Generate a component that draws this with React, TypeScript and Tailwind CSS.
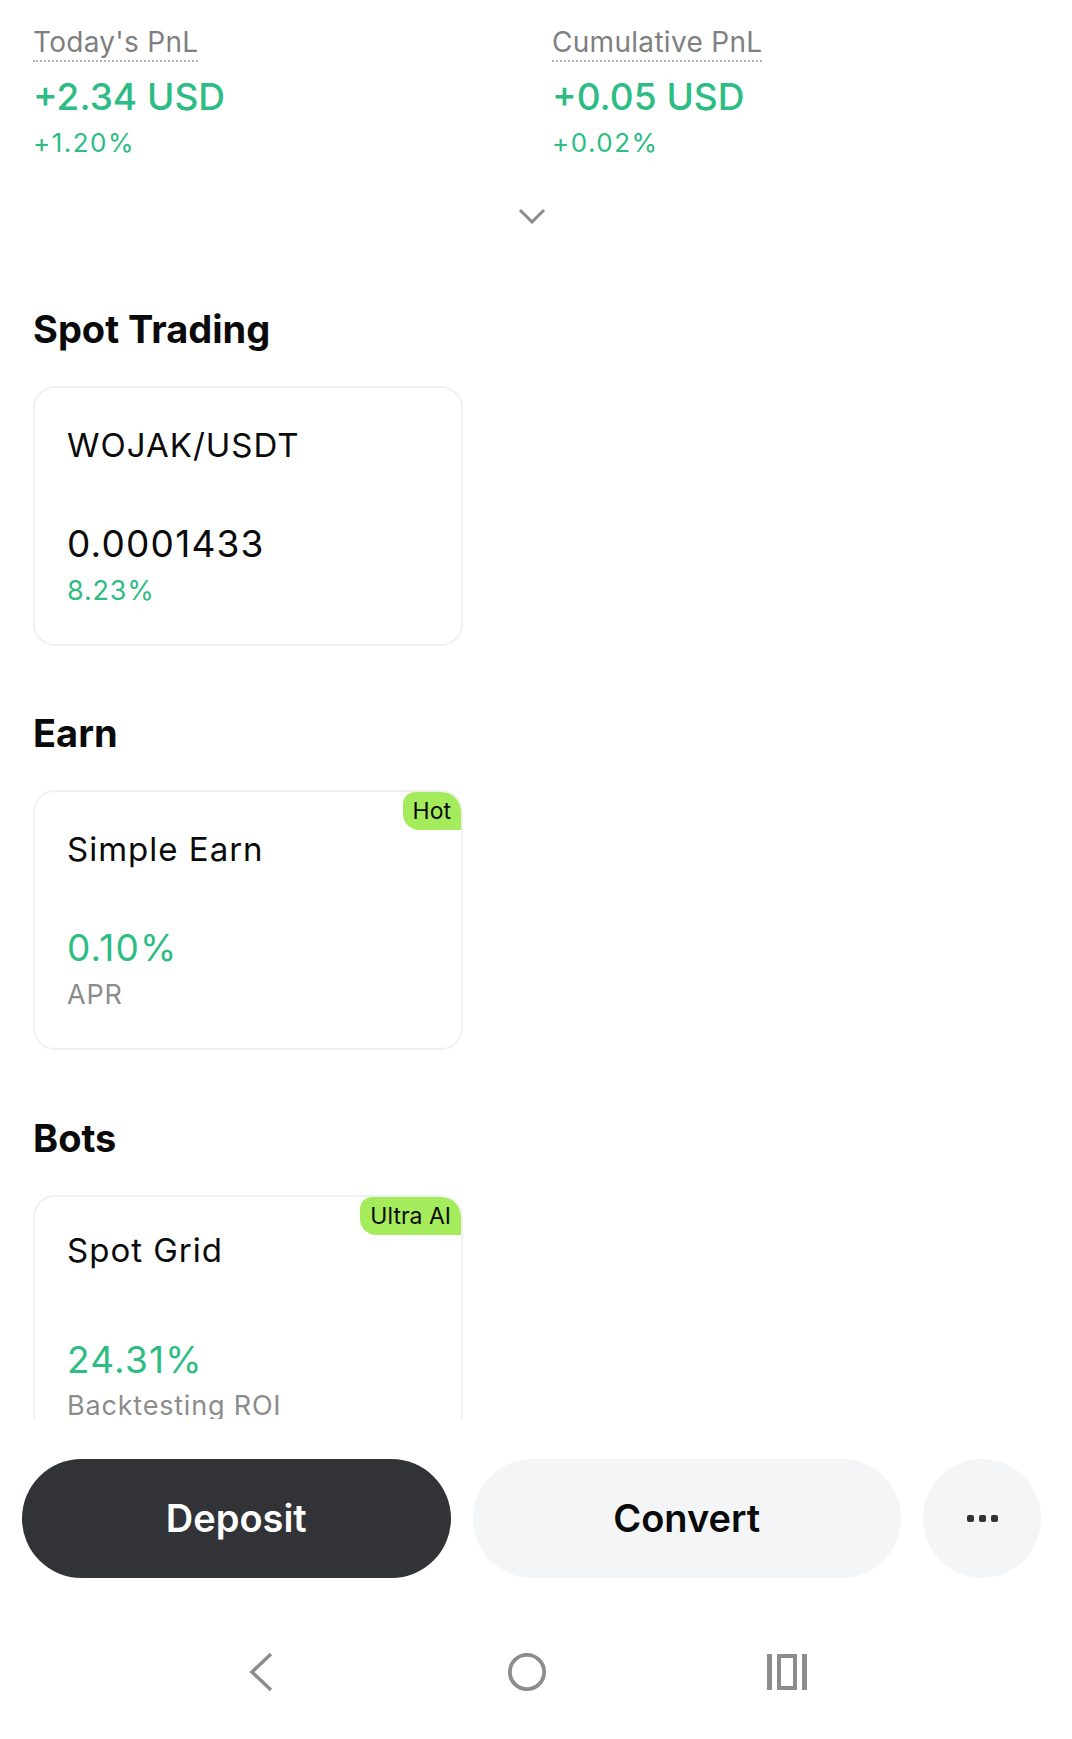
import type { ReactNode } from 'react';

const GREEN = 'text-[#2dbc84]';

type CardProps = {
  title: string;
  value: string;
  sub: string;
  valueClass: string;
  subClass: string;
  badge?: string;
  tight?: boolean;
};

const Stat = ({ label, value, change }: { label: string; value: string; change: string }) => (
  <div>
    <div className="flex">
      <span className="border-b-2 border-dotted border-[#b5b5b5] text-[28px] leading-[36px] tracking-[0.3px] text-[#7f7f7f]">
        {label}
      </span>
    </div>
    <div className={`mt-[13px] text-[37px] font-medium leading-[44px] ${GREEN}`}>{value}</div>
    <div className={`mt-[8px] text-[26px] leading-[32px] tracking-[1.5px] ${GREEN}`}>{change}</div>
  </div>
);

const SectionTitle = ({ children, className }: { children: ReactNode; className: string }) => (
  <h2 className={`text-[38px] font-bold leading-[46px] text-[#0a0a0a] ${className}`}>{children}</h2>
);

const Card = ({ title, value, sub, valueClass, subClass, badge, tight }: CardProps) => (
  <div
    className={`relative mt-[34px] w-[430px] overflow-hidden rounded-[22px] border-2 border-[#f0f0f0] bg-white px-[32px] pb-[37px] ${
      tight ? 'pt-[33px]' : 'pt-[37px]'
    }`}
  >
    {badge && (
      <span className="absolute right-0 top-0 rounded-bl-[16px] rounded-tl-[12px] bg-[#a5ec5c] px-[10px] text-[23px] leading-[38px] text-[#0a0a0a]">
        {badge}
      </span>
    )}
    <div className="text-[33px] leading-[40px] tracking-[1px] text-[#0a0a0a]">{title}</div>
    <div className={`text-[37px] leading-[44px] tracking-[1.2px] ${tight ? 'mt-[68px]' : 'mt-[57px]'} ${valueClass}`}>
      {value}
    </div>
    <div className={`text-[27px] leading-[32px] tracking-[0.8px] ${tight ? 'mt-[8px]' : 'mt-[9px]'} ${subClass}`}>
      {sub}
    </div>
  </div>
);

const App = () => {
  return (
    <div className="flex h-[1739px] w-[1072px] flex-col overflow-hidden bg-white font-['Inter',sans-serif]">
      <div className="h-[1419px] shrink-0 overflow-hidden px-[33px]">
        <div className="grid grid-cols-2 gap-8 pt-[24px]">
          <Stat label="Today's PnL" value="+2.34 USD" change="+1.20%" />
          <Stat label="Cumulative PnL" value="+0.05 USD" change="+0.02%" />
        </div>

        <div className="mt-[49px] flex h-[17px] justify-center pr-[8px]">
          <svg width="28" height="17" viewBox="0 0 28 17" fill="none">
            <path d="M2 2L14 14L26 2" stroke="#8a8a8a" strokeWidth="3" />
          </svg>
        </div>

        <SectionTitle className="mt-[81px]">Spot Trading</SectionTitle>
        <Card
          title="WOJAK/USDT"
          value="0.0001433"
          sub="8.23%"
          valueClass="text-[#0a0a0a]"
          subClass={GREEN}
        />

        <SectionTitle className="mt-[64px]">Earn</SectionTitle>
        <Card
          title="Simple Earn"
          value="0.10%"
          sub="APR"
          valueClass={GREEN}
          subClass="text-[#8c8c8c]"
          badge="Hot"
        />

        <SectionTitle className="mt-[65px]">Bots</SectionTitle>
        <Card
          title="Spot Grid"
          value="24.31%"
          sub="Backtesting ROI"
          valueClass={GREEN}
          subClass="text-[#8c8c8c]"
          badge="Ultra AI"
          tight
        />
      </div>

      <div className="flex gap-[22px] pl-[22px] pr-[31px] pt-[40px]">
        <button className="h-[119px] flex-1 rounded-full bg-[#323336] text-[38px] font-semibold text-white">
          Deposit
        </button>
        <button className="h-[119px] flex-1 rounded-full bg-[#f3f5f6] text-[38px] font-semibold text-[#0a0a0a]">
          Convert
        </button>
        <button className="flex h-[119px] w-[118px] items-center justify-center gap-[5px] rounded-full bg-[#f3f5f6]">
          <span className="h-[7px] w-[7px] rounded-[2px] bg-[#333]" />
          <span className="h-[7px] w-[7px] rounded-[2px] bg-[#333]" />
          <span className="h-[7px] w-[7px] rounded-[2px] bg-[#333]" />
        </button>
      </div>

      <nav className="flex h-[161px] items-center justify-center pr-[24px] pt-[27px]">
        <div className="flex w-[40px] justify-center">
          <svg width="26" height="40" viewBox="0 0 26 40" fill="none">
            <path d="M23 2L4 20L23 38" stroke="#8c8c8c" strokeWidth="3.5" />
          </svg>
        </div>
        <div className="ml-[226px] flex w-[40px] justify-center">
          <svg width="42" height="42" viewBox="0 0 42 42" fill="none">
            <circle cx="21" cy="21" r="18" stroke="#8c8c8c" strokeWidth="4" />
          </svg>
        </div>
        <div className="ml-[220px] flex w-[40px] justify-center">
          <svg width="40" height="36" viewBox="0 0 40 36" fill="none">
            <rect x="0" y="0" width="5" height="36" fill="#8c8c8c" />
            <rect x="12" y="2" width="16" height="32" stroke="#8c8c8c" strokeWidth="4" />
            <rect x="35" y="0" width="5" height="36" fill="#8c8c8c" />
          </svg>
        </div>
      </nav>
    </div>
  );
};

export default App;
